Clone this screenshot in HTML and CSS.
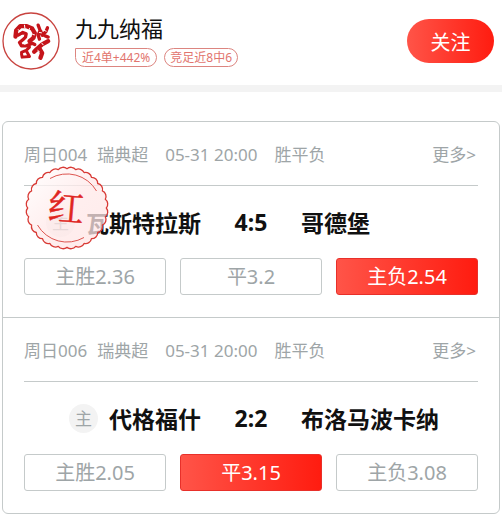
FILE: index.html
```
<!DOCTYPE html>
<html lang="zh-CN">
<head>
  <meta charset="UTF-8">
  <meta name="viewport" content="width=device-width, initial-scale=1.0">
  <title>九九纳福</title>
  <link rel="stylesheet" href="styles.css">
</head>
<body>

<!-- Profile -->
<header class="profile">
  <svg class="avatar" viewBox="0 0 58 58" aria-hidden="true">
    <circle cx="29" cy="29" r="28" fill="#fff" stroke="#c8433f" stroke-width="1.3"/>
    <g transform="translate(9.5 8.5) scale(.333)" fill="none" stroke="#c5141a" stroke-linejoin="round" stroke-linecap="round">
      <path stroke-width="13" d="M12 48L14 30L26 17L46 17L62 24L70 38L66 52L54 62"/>
      <path stroke-width="10" d="M20 44L34 36L44 40L42 50L34 58L24 66L30 76L46 76L62 68L70 72"/>
      <path stroke-width="9" d="M54 80L44 90L30 96M46 94L54 108L32 110L30 100"/>
      <path stroke-width="10" d="M80 14L86 30L80 44L84 56M108 22L103 34L92 44L88 32M100 46L110 50"/>
      <path stroke-width="13" d="M110 62L92 72L76 86L68 94M84 84L92 98L87 112"/>
      <path stroke-width="3" stroke="#fff" d="M20 28L26 31M39 14L40 22M54 24L52 30M64 42L69 43M30 46L35 47M37 68L40 72M84 36L90 37M99 30L104 32M91 68L95 73M79 90L84 94"/>
    </g>
  </svg>
  <div class="profile-info">
    <h1 class="name">九九纳福</h1>
    <div class="tags">
      <span class="tag tag-corner">近4单+442%</span>
      <span class="tag">竞足近8中6</span>
    </div>
  </div>
  <button type="button" class="follow">关注</button>
</header>

<!-- Matches -->
<main class="card">
  <section class="match">
    <div class="meta">
      <span class="no">周日004</span>
      <span class="league">瑞典超</span>
      <span class="time">05-31 20:00</span>
      <span>胜平负</span>
      <a href="#" class="more">更多&gt;</a>
    </div>
    <div class="teams">
      <div class="home"><span class="host">主</span>瓦斯特拉斯</div>
      <div class="score">4:5</div>
      <div class="away">哥德堡</div>
    </div>
    <div class="odds">
      <button type="button" class="odd">主胜2.36</button>
      <button type="button" class="odd">平3.2</button>
      <button type="button" class="odd active">主负2.54</button>
    </div>
    <svg class="stamp" viewBox="-42 -42 84 84" role="img" aria-label="红">
      <defs>
        <linearGradient id="stampFill" x1="0" y1="0" x2="1" y2="1">
          <stop offset="0" stop-color="#fff" stop-opacity=".75"/>
          <stop offset=".5" stop-color="#ffe9e9" stop-opacity=".75"/>
          <stop offset="1" stop-color="#ffe4e4" stop-opacity=".75"/>
        </linearGradient>
      </defs>
      <path fill="url(#stampFill)" stroke="#d83a35" stroke-width="1.3" stroke-linejoin="round" d="M39.3 0A6 6 0 0 1 38.3 8.7A6 6 0 0 1 35.4 17.1A6 6 0 0 1 30.7 24.5A6 6 0 0 1 24.5 30.7A6 6 0 0 1 17.1 35.4A6 6 0 0 1 8.7 38.3A6 6 0 0 1 0 39.3A6 6 0 0 1 -8.7 38.3A6 6 0 0 1 -17.1 35.4A6 6 0 0 1 -24.5 30.7A6 6 0 0 1 -30.7 24.5A6 6 0 0 1 -35.4 17.1A6 6 0 0 1 -38.3 8.7A6 6 0 0 1 -39.3 0A6 6 0 0 1 -38.3 -8.7A6 6 0 0 1 -35.4 -17.1A6 6 0 0 1 -30.7 -24.5A6 6 0 0 1 -24.5 -30.7A6 6 0 0 1 -17.1 -35.4A6 6 0 0 1 -8.7 -38.3A6 6 0 0 1 0 -39.3A6 6 0 0 1 8.7 -38.3A6 6 0 0 1 17.1 -35.4A6 6 0 0 1 24.5 -30.7A6 6 0 0 1 30.7 -24.5A6 6 0 0 1 35.4 -17.1A6 6 0 0 1 38.3 -8.7A6 6 0 0 1 39.3 0Z"/>
      <path fill="none" stroke="#dd5550" d="M-17 -29.5A34 34 0 0 1 29.5 -17M-29.5 17A34 34 0 0 0 17 29.5"/>
      <text class="stamp-text" x="-1" y="13" text-anchor="middle" transform="rotate(5)">红</text>
    </svg>
  </section>

  <section class="match">
    <div class="meta">
      <span class="no">周日006</span>
      <span class="league">瑞典超</span>
      <span class="time">05-31 20:00</span>
      <span>胜平负</span>
      <a href="#" class="more">更多&gt;</a>
    </div>
    <div class="teams">
      <div class="home"><span class="host">主</span>代格福什</div>
      <div class="score">2:2</div>
      <div class="away">布洛马波卡纳</div>
    </div>
    <div class="odds">
      <button type="button" class="odd">主胜2.05</button>
      <button type="button" class="odd active">平3.15</button>
      <button type="button" class="odd">主负3.08</button>
    </div>
  </section>
</main>

</body>
</html>
```
FILE: styles.css
```
* {
  box-sizing: border-box;
}

body {
  margin: 0;
  background: #fff;
  color: #111;
  font-family: "Noto Sans", "Noto Sans CJK SC", sans-serif;
}

button {
  font-family: inherit;
  cursor: pointer;
}

.profile {
  display: flex;
  align-items: center;
  padding: 12px 8px 15px 2px;
  border-bottom: 7px solid #f3f3f3;
}

.avatar {
  width: 58px;
  height: 58px;
}

.profile-info {
  flex: 1;
  padding: 0 0 3px 15px;
}

.name {
  margin: 0;
  font-size: 22px;
  line-height: 32px;
  font-weight: 400;
}

.tags {
  display: flex;
  gap: 7px;
  margin-top: 4px;
}

.tag {
  padding: 0 5px;
  border: 1px solid #dc8580;
  border-radius: 10px;
  color: #e2756e;
  font-size: 12px;
  line-height: 17px;
}

.tag-corner {
  padding: 0 6px;
  border-top-left-radius: 0;
}

.follow {
  width: 87px;
  height: 44px;
  border: 0;
  border-radius: 22px;
  background: linear-gradient(to right, #ff5448, #ff1c10);
  color: #fff;
  font-size: 20px;
}

.card {
  margin: 29px 2px 2px;
  border: 1px solid #c5caca;
  border-radius: 6px;
}

.match {
  position: relative;
  padding: 20px 21px 22px;
}

.match + .match {
  border-top: 1px solid #c5caca;
}

.meta {
  display: flex;
  padding: 0 2px 17px 0;
  border-bottom: 1px solid #c5caca;
  color: #9ea5a7;
  font-size: 17px;
  line-height: 26px;
}

.no {
  margin-right: 10px;
}

.league,
.time {
  margin-right: 17px;
}

.more {
  margin-left: auto;
  color: inherit;
  text-decoration: none;
}

.teams {
  display: grid;
  grid-template-columns: 1fr 100px 1fr;
  align-items: center;
  height: 72px;
  font-size: 23px;
  font-weight: 700;
  white-space: nowrap;
}

.home {
  display: flex;
  justify-content: flex-end;
  align-items: center;
}

.host {
  width: 29px;
  height: 29px;
  margin-right: 11px;
  border-radius: 50%;
  background: #f3f3f3;
  color: #9ea5a7;
  font-size: 17px;
  line-height: 29px;
  font-weight: 400;
  text-align: center;
}

.score {
  text-align: center;
}

.odds {
  display: grid;
  grid-template-columns: repeat(3, 1fr);
  gap: 14px;
}

.odd {
  height: 37px;
  padding: 0;
  border: 1px solid #c5caca;
  border-radius: 3px;
  background: #fff;
  color: #9ea5a7;
  font-size: 20px;
  line-height: 35px;
}

.odd.active {
  border-color: #e8302a;
  background: linear-gradient(to right, #ff5448, #ff1c10);
  color: #fff;
}

/* result stamp over the match row */
.stamp {
  position: absolute;
  top: 44px;
  left: 22px;
  width: 84px;
  height: 84px;
}

.stamp-text {
  fill: #e0251f;
  stroke: #e0251f;
  stroke-width: .5;
  font-family: "Noto Serif CJK SC", "Noto Sans CJK SC", serif;
  font-size: 36px;
}
```
